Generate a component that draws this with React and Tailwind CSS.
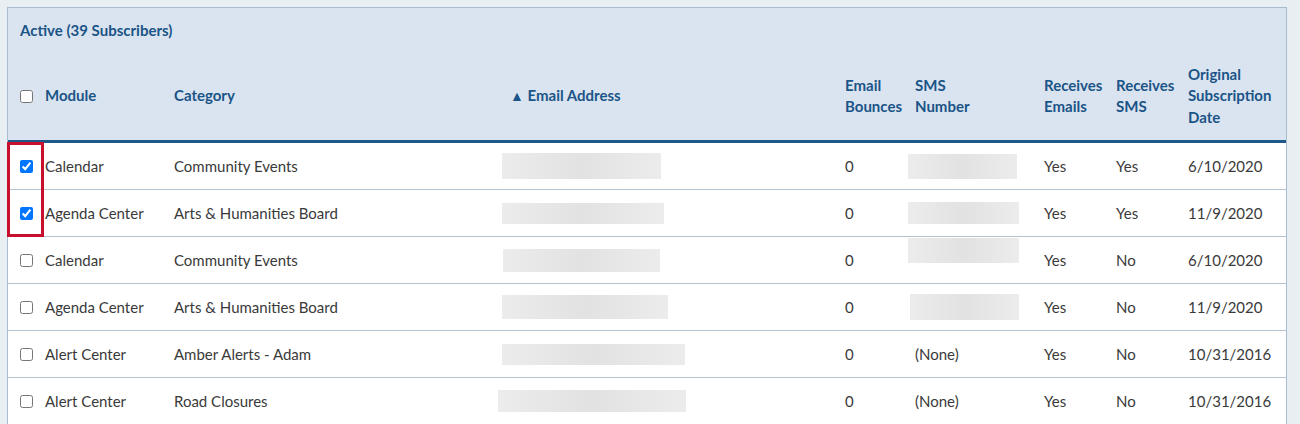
import React from 'react';

// Subscriber list table (Active subscribers)
const cols = 'grid grid-cols-[154px_336px_335px_70px_129px_72px_72px_110px]';

const rows = [
  { module: 'Calendar', category: 'Community Events', checked: true, email: [4, 159, 26], sms: [5, 109, 25], yesEmail: 'Yes', yesSms: 'Yes', date: '6/10/2020' },
  { module: 'Agenda Center', category: 'Arts & Humanities Board', checked: true, email: [4, 162, 21], sms: [5, 111, 22], yesEmail: 'Yes', yesSms: 'Yes', date: '11/9/2020' },
  { module: 'Calendar', category: 'Community Events', checked: false, email: [5, 157, 23], sms: [5, 111, 25], yesEmail: 'Yes', yesSms: 'No', date: '6/10/2020', smsUp: true },
  { module: 'Agenda Center', category: 'Arts & Humanities Board', checked: false, email: [4, 166, 24], sms: [7, 109, 26], yesEmail: 'Yes', yesSms: 'No', date: '11/9/2020' },
  { module: 'Alert Center', category: 'Amber Alerts - Adam', checked: false, email: [4, 183, 21], sms: null, yesEmail: 'Yes', yesSms: 'No', date: '10/31/2016' },
  { module: 'Alert Center', category: 'Road Closures', checked: false, email: [0, 188, 22], sms: null, yesEmail: 'Yes', yesSms: 'No', date: '10/31/2016' },
];

function Blur({ spec }) {
  const [ml, w, h] = spec;
  return (
    <div
      className="bg-linear-to-r from-[#ececec] via-[#e2e2e2] to-[#ececec] blur-[0.5px]"
      style={{ marginLeft: ml, width: w, height: h }}
    />
  );
}

export default function App() {
  return (
    <div className="min-h-[424px] bg-[#e9eef3] pt-[7px] pl-[7px] font-['Lato',sans-serif] text-[15px]">
      <div className="relative w-[1280px] border border-[#a9bdd0] bg-white">
        <div className="bg-[#dae4f0] text-[#1b5487]">
          <div className="px-[12px] pt-[12px] pb-[12px] text-[15px] font-bold leading-[20px]">
            Active (39 Subscribers)
          </div>
          <div className={`${cols} h-[91px] items-center border-b-[3px] border-[#1d5888] font-bold leading-[21.5px]`}>
            <div className="flex items-center pl-[12px]">
              <input type="checkbox" className="m-0 mr-[12px] h-[13px] w-[13px]" />
              <span>Module</span>
            </div>
            <div className="pl-[12px]">Category</div>
            <div className="pl-[12px]">
              <span className="text-[14px]">▲</span> Email Address
            </div>
            <div className="whitespace-nowrap pl-[12px]">Email<br />Bounces</div>
            <div className="whitespace-nowrap pl-[12px]">SMS<br />Number</div>
            <div className="whitespace-nowrap pl-[12px]">Receives<br />Emails</div>
            <div className="whitespace-nowrap pl-[12px]">Receives<br />SMS</div>
            <div className="whitespace-nowrap pl-[12px]">Original<br />Subscription<br />Date</div>
          </div>
        </div>

        <div className="text-[#3a3a3a]">
          {rows.map((r, i) => (
            <div key={i} className={`${cols} h-[47px] items-center border-b border-[#b5c4d3]`}>
              <div className="flex items-center pl-[12px]">
                <input type="checkbox" defaultChecked={r.checked} className="m-0 mr-[12px] h-[13px] w-[13px]" />
                <span className="whitespace-nowrap">{r.module}</span>
              </div>
              <div className="pl-[12px]">{r.category}</div>
              <div><Blur spec={r.email} /></div>
              <div className="pl-[12px]">0</div>
              <div className={r.smsUp ? 'self-start pt-[1px]' : ''}>
                {r.sms ? <Blur spec={r.sms} /> : <span className="pl-[12px]">(None)</span>}
              </div>
              <div className="pl-[12px]">{r.yesEmail}</div>
              <div className="pl-[12px]">{r.yesSms}</div>
              <div className="pl-[12px]">{r.date}</div>
            </div>
          ))}
        </div>

        {/* highlight around the selected checkboxes */}
        <div className="pointer-events-none absolute left-[-1px] top-[134px] h-[95px] w-[37px] border-[3px] border-[#c8102e]" />
      </div>
    </div>
  );
}
